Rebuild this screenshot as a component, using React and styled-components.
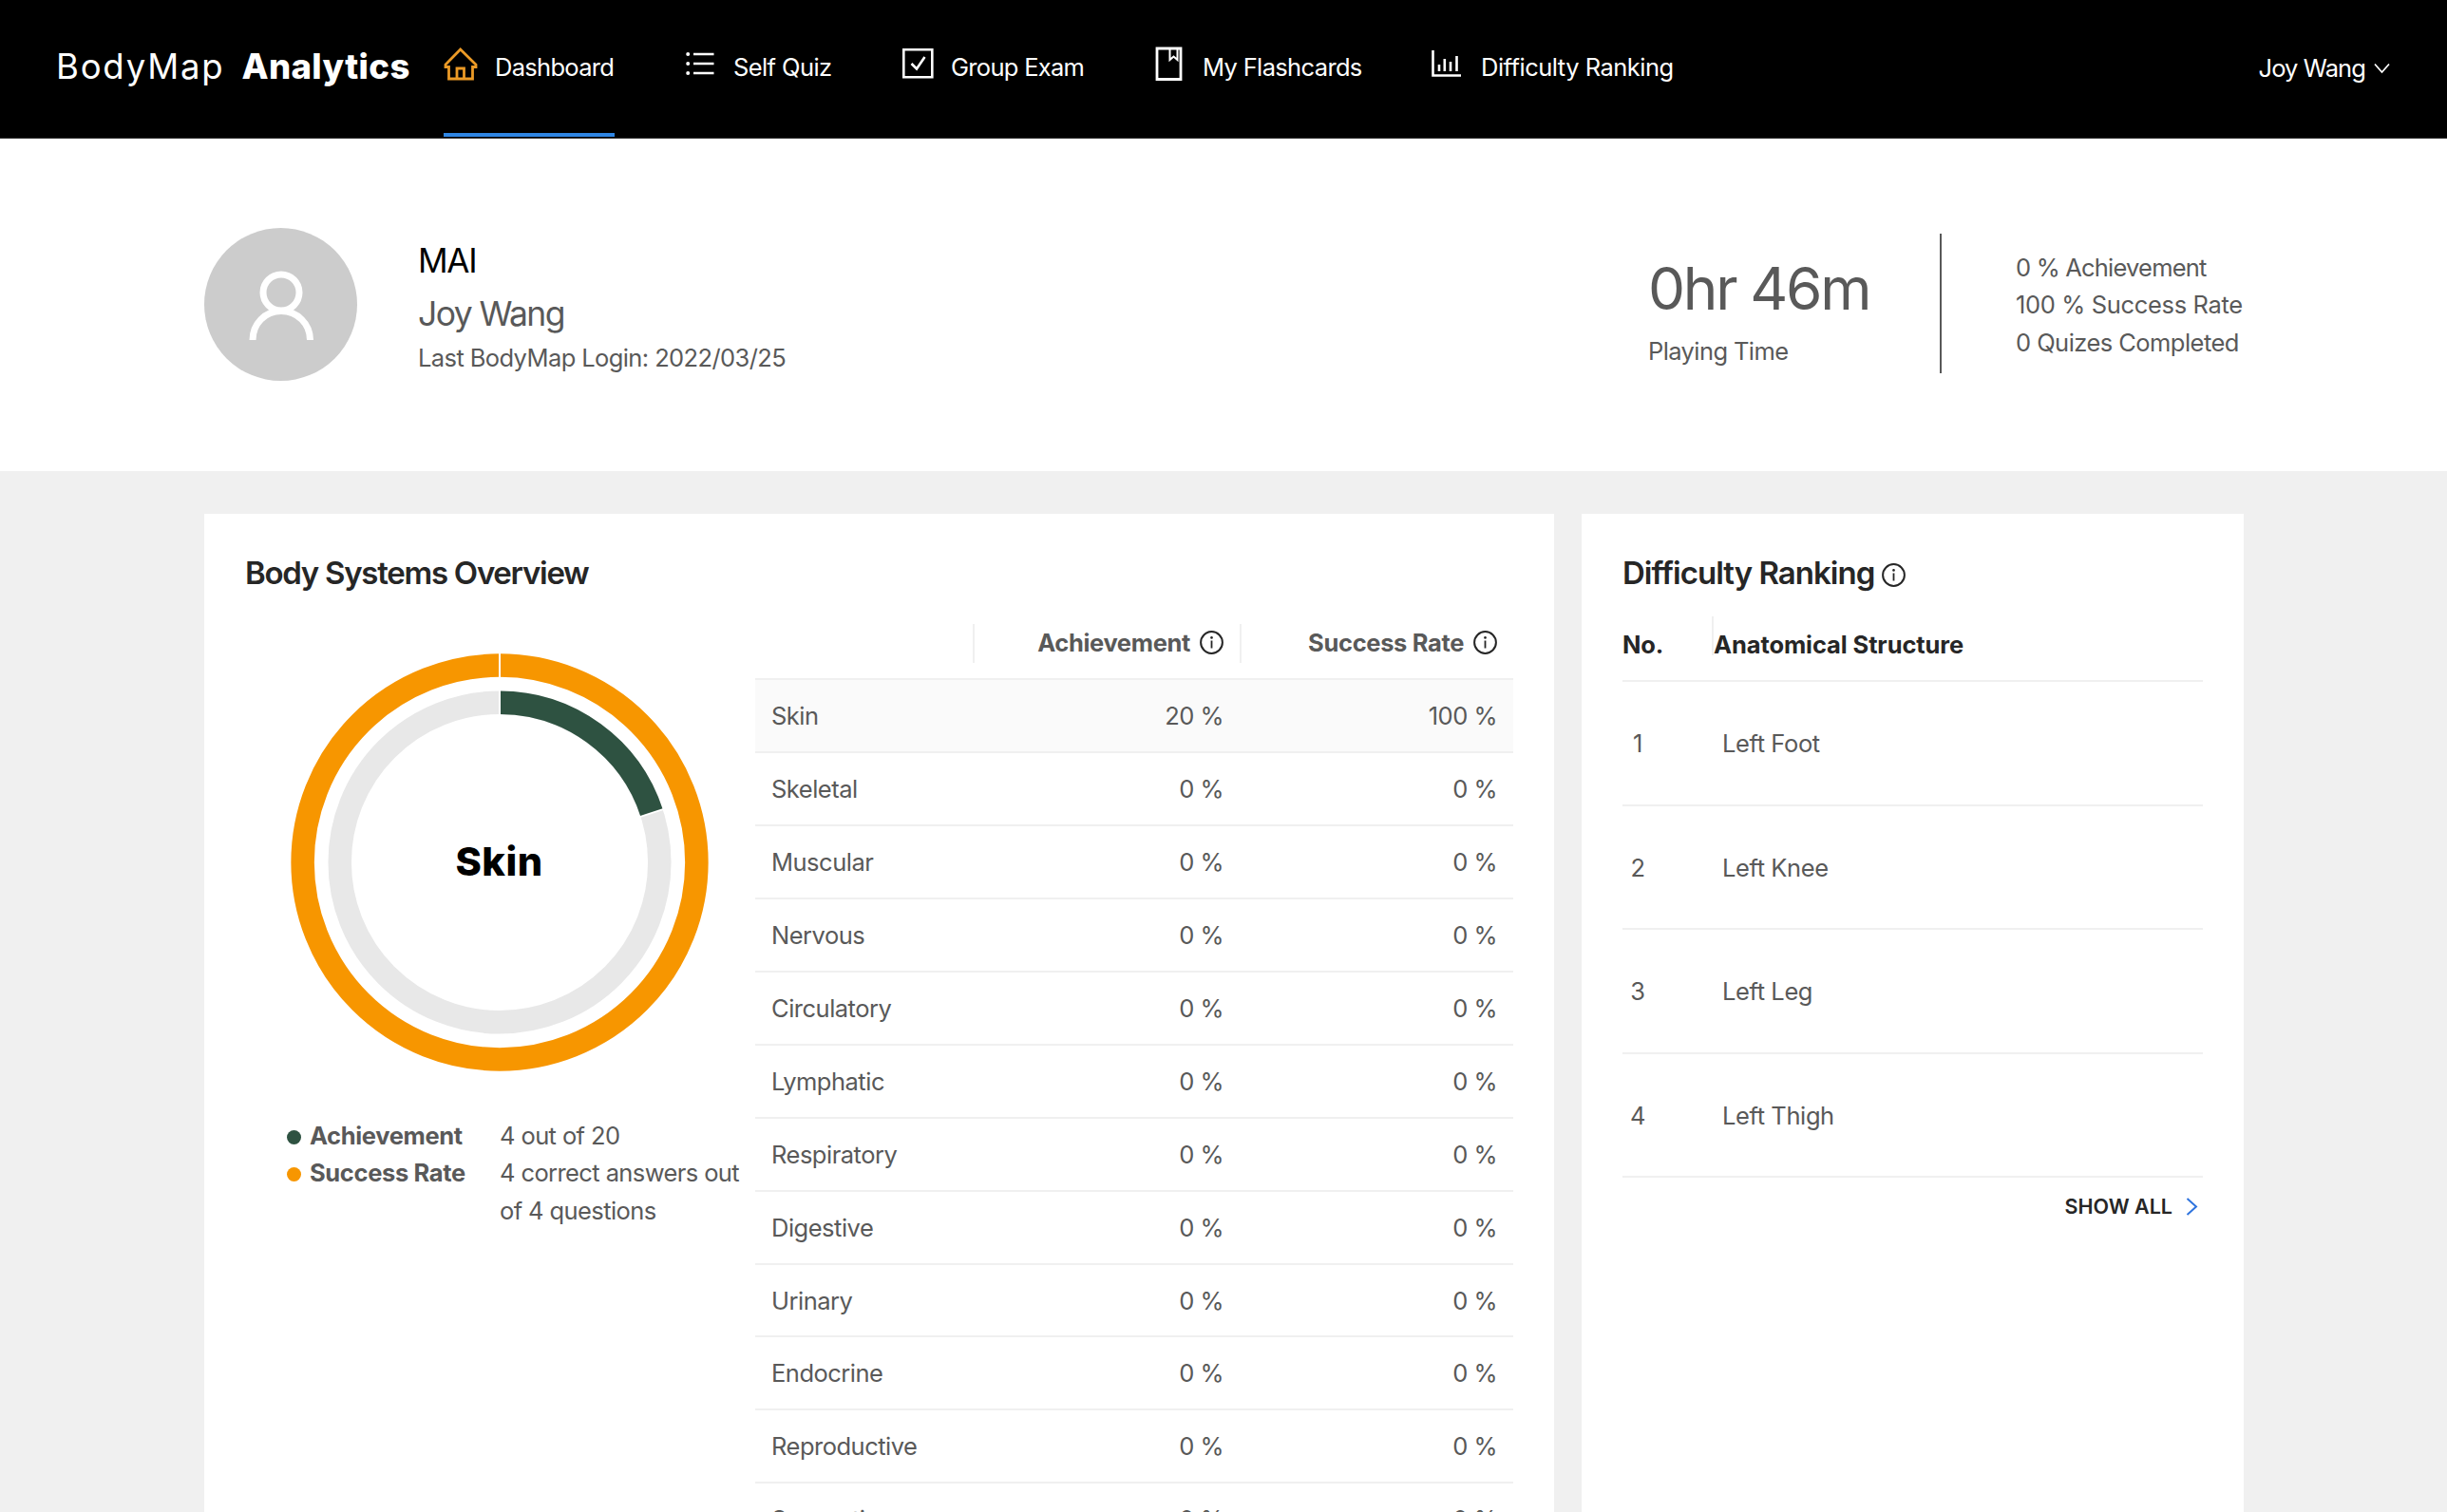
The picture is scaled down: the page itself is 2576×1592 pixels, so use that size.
import styled, { createGlobalStyle } from 'styled-components'

// Colors used across the page
const colors = {
  text: '#595959',
  title: '#262626',
  line: '#f0f0f0',
  background: '#f0f0f0',
  orange: '#f79600',
  green: '#2e5241',
  grey: '#e8e8e8',
  blue: '#2f86e4',
}

const GlobalStyle = createGlobalStyle`
  * {
    box-sizing: border-box;
  }

  html, body, #root {
    height: 100%;
  }

  #root {
    display: flex;
    flex-direction: column;
  }

  body {
    margin: 0;
    overflow: hidden;
    background-color: ${colors.background};
    color: ${colors.text};
    font-family: Inter, 'Liberation Sans', sans-serif;
    font-size: 25.5px;
  }
`

// Header
const Header = styled.header`
  display: flex;
  flex: none;
  height: 146px;
  padding: 0 60px 0 59px;
  background-color: #000000;
  border-bottom: 1px solid #333333;
  color: #ffffff;
`

const Logo = styled.div`
  display: flex;
  width: 408px;
  padding-top: 48px;
  font-size: 36.5px;
  line-height: 44px;
  font-weight: 400;
  letter-spacing: 1.8px;
  white-space: nowrap;

  strong {
    margin-left: 18px;
    font-weight: 800;
    letter-spacing: 0.4px;
  }
`

const Nav = styled.nav`
  display: flex;
  flex: 1;
  gap: 75px;
`

const NavItem = styled.a`
  display: flex;
  width: ${({ $width }) => $width}px;
  height: 144px;
  padding-top: 45px;
  border-bottom: 4px solid ${({ $active }) => ($active ? colors.blue : 'transparent')};
  line-height: 52px;
  letter-spacing: ${({ $spacing }) => $spacing || 0}px;
  white-space: nowrap;

  svg {
    flex: none;
    width: 36px;
    height: 44px;
    margin-right: ${({ $gap }) => $gap}px;
  }
`

const User = styled.div`
  display: flex;
  gap: 9px;
  padding-top: 46px;
  line-height: 52px;
  letter-spacing: -0.9px;

  svg {
    margin-top: 20px;
  }
`

// Profile banner
const Profile = styled.section`
  display: flex;
  flex: none;
  height: 350px;
  padding: 94px 214px 0 215px;
  background-color: #ffffff;
`

const Avatar = styled.div`
  width: 161px;
  height: 161px;
  border-radius: 50%;
  background-color: #cccccc;
`

const Identity = styled.div`
  flex: 1;
  padding: 10px 0 0 64px;
`

const Organisation = styled.div`
  color: #000000;
  font-size: 35px;
  line-height: 48px;
  letter-spacing: -1.3px;
`

const FullName = styled.div`
  margin-top: 8px;
  font-size: 35.5px;
  line-height: 49px;
  letter-spacing: -1.6px;
`

const LastLogin = styled.div`
  margin-top: 2px;
  line-height: 39px;
  letter-spacing: -0.6px;
`

const PlayingTime = styled.div`
  width: 308px;
  padding: 20px 0 0 1px;

  strong {
    display: block;
    font-size: 62px;
    font-weight: 400;
    line-height: 88px;
    letter-spacing: -2.3px;
  }

  span {
    display: block;
    line-height: 44px;
    letter-spacing: -0.6px;
  }
`

const Stats = styled.ul`
  width: 320px;
  height: 147px;
  margin: 6px 0 0;
  padding: 16px 0 0 78px;
  border-left: 2px solid ${colors.text};
  list-style: none;
  line-height: 39.3px;
  white-space: nowrap;
`

const Stat = styled.li`
  letter-spacing: ${({ $spacing }) => $spacing}px;
`

// Main content
const Main = styled.main`
  display: flex;
  flex: 1;
  gap: 29px;
  min-height: 0;
  padding: 45px 214px 0 215px;
`

const Card = styled.section`
  width: ${({ $width }) => $width}px;
  padding: 39px 43px 0 43px;
  background-color: #ffffff;
  overflow: hidden;
`

const CardTitle = styled.h2`
  display: flex;
  align-items: center;
  margin: 0 0 1px;
  color: ${colors.title};
  font-size: 33px;
  font-weight: 600;
  line-height: 46px;
  letter-spacing: ${({ $spacing }) => $spacing}px;

  svg {
    margin: 4px 0 0 8px;
  }
`

const Overview = styled.div`
  display: flex;
`

const ChartColumn = styled.div`
  flex: none;
  width: 537px;
  padding: 61px 0 0 43px;
`

const ChartBox = styled.div`
  display: grid;
  width: 449px;
  height: 440px;
  place-items: center;

  > * {
    grid-area: 1 / 1;
  }
`

const ChartLabel = styled.div`
  padding-bottom: 3px;
  color: #000000;
  font-size: 41.5px;
  font-weight: 800;
  letter-spacing: 0.5px;
`

const Legend = styled.dl`
  display: grid;
  grid-template-columns: 224px 1fr;
  margin: 48px 0 0 1px;
  line-height: 39.3px;
  white-space: nowrap;

  dt {
    display: flex;
    gap: 9px;
    font-weight: 700;
    letter-spacing: -0.35px;
  }

  dd {
    margin: 0;
    letter-spacing: -0.6px;
  }
`

const Dot = styled.i`
  width: 15px;
  height: 15px;
  margin-top: 14px;
  border-radius: 50%;
  background-color: ${({ $color }) => $color};
`

const SystemsTable = styled.div`
  flex: none;
  width: 798px;
  padding-top: 20px;
`

const SystemsHead = styled.div`
  display: grid;
  grid-template-columns: 229px 281px 288px;
  height: 69px;
  border-bottom: 2px solid ${colors.line};
  font-weight: 700;
  letter-spacing: -0.35px;
`

const HeadCell = styled.div`
  display: flex;
  justify-content: flex-end;
  gap: 10px;
  height: 41px;
  margin-top: 10px;
  padding-right: 17px;
  border-left: 2px solid ${colors.line};
  line-height: 39px;

  svg {
    margin-top: 7px;
  }
`

const SystemRow = styled.div`
  display: grid;
  grid-template-columns: 229px 281px 288px;
  height: 76.94px;
  border-bottom: 2px solid ${colors.line};
  background-color: ${({ $selected }) => ($selected ? '#fafafa' : '#ffffff')};
  line-height: 75px;
  letter-spacing: -0.5px;

  span {
    padding: 0 17px;
    text-align: right;
  }

  span:first-child {
    text-align: left;
  }
`

const RankingHead = styled.div`
  display: grid;
  grid-template-columns: 94px 1fr;
  width: 611px;
  height: 91px;
  padding-top: 22px;
  border-bottom: 2px solid ${colors.line};
  color: ${colors.title};
  font-weight: 700;
  letter-spacing: -0.1px;

  span {
    height: 41px;
    line-height: 60px;
  }

  span + span {
    border-left: 2px solid ${colors.line};
  }
`

const RankingRow = styled.div`
  display: grid;
  grid-template-columns: 105px 1fr;
  width: 611px;
  height: 130.6px;
  border-bottom: 2px solid ${colors.line};
  line-height: 129px;
  letter-spacing: -0.4px;
`

const RankNumber = styled.span`
  width: 32px;
  text-align: center;
`

const ShowAll = styled.a`
  display: flex;
  justify-content: flex-end;
  gap: 14px;
  width: 606px;
  padding-top: 10px;
  color: ${colors.title};
  font-size: 21.5px;
  font-weight: 600;
  line-height: 40px;

  svg {
    margin-top: 11px;
  }
`

// Icons
const HomeIcon = () => (
  <svg viewBox="0 0 36 44" fill="none" stroke="#eb9a26" strokeWidth="2.8">
    <path d="M17.7 7L2 23v2.500h3.500v12.500h25V25.500h3.500v-2.500z" />
    <path d="M14 38V27h7.500v11" />
  </svg>
)

const ListIcon = () => (
  <svg viewBox="0 0 36 44" fill="none" stroke="#ffffff" strokeWidth="2.400">
    <path d="M8 12h21.500M8 22h21.500M8 32h21.500" />
    <g fill="#ffffff" stroke="none">
      <circle cx="2.200" cy="12" r="2" />
      <circle cx="2.200" cy="22" r="2" />
      <circle cx="2.200" cy="32" r="2" />
    </g>
  </svg>
)

const CheckIcon = () => (
  <svg viewBox="0 0 36 44" fill="none" stroke="#ffffff" strokeWidth="2.600">
    <path d="M1.300 7.300h30v29h-30z" />
    <path d="M9.500 22l5.500 5.500L23.500 15" />
  </svg>
)

const BookIcon = () => (
  <svg viewBox="0 0 36 44" fill="none" stroke="#ffffff" strokeWidth="2.800">
    <path d="M2 6h25v32.500H2z" />
    <path d="M15.500 6v12l4-3.500 4 3.500V6" strokeWidth="2" />
  </svg>
)

const ChartIcon = () => (
  <svg viewBox="0 0 36 44" fill="none" stroke="#ffffff" strokeWidth="2.600">
    <path d="M1.500 8v26.500H31" />
    <path d="M8 23v7M13.800 17v13M20 20v10M26.500 14v16" />
  </svg>
)

const InfoIcon = () => (
  <svg width="25" height="25" viewBox="0 0 25 25" fill="none" stroke={colors.title}>
    <circle cx="12.500" cy="12.500" r="11.400" strokeWidth="2" />
    <path d="M12.500 10.500V18.500" strokeWidth="1.800" />
    <circle cx="12.500" cy="7.400" r="1.300" fill={colors.title} stroke="none" />
  </svg>
)

const DownIcon = () => (
  <svg width="17" height="12" viewBox="0 0 17 12" fill="none" stroke="#ffffff" strokeWidth="1.700">
    <path d="M1 1.500l7.500 8.500L16 1.500" />
  </svg>
)

const RightIcon = () => (
  <svg width="13" height="19" viewBox="0 0 13 19" fill="none" stroke="#2f74de" strokeWidth="2">
    <path d="M1.500 1l9.500 8.500L1.500 18" />
  </svg>
)

const UserIcon = () => (
  <svg width="161" height="161" viewBox="0 0 161 161" fill="none" stroke="#ffffff" strokeWidth="7">
    <circle cx="81" cy="68" r="19" />
    <path d="M51 118c0-17 13-30.500 30-30.500s30.500 13.500 30.500 30.500" />
  </svg>
)

// Two rings: the outer one is the success rate, the inner one the achievement
const RING = 24.5

const Ring = ({ radius, value, color }) => {
  const length = 2 * Math.PI * radius
  const angle = value * 2 * Math.PI
  const inner = radius - RING / 2 - 1
  const outer = radius + RING / 2 + 1
  return (
    <g fill="none" strokeWidth={RING}>
      {value < 1 && <circle r={radius} stroke={colors.grey} />}
      <circle
        r={radius}
        stroke={color}
        strokeDasharray={value < 1 ? `${length * value} ${length}` : undefined}
        transform="rotate(-90)"
      />
      <path d={`M0 ${-inner}V${-outer}`} stroke="#ffffff" strokeWidth="2" />
      <path
        d={`M${inner * Math.sin(angle)} ${-inner * Math.cos(angle)}L${outer * Math.sin(angle)} ${-outer * Math.cos(angle)}`}
        stroke="#ffffff"
        strokeWidth="2"
      />
    </g>
  )
}

const navItems = [
  { label: 'Dashboard', Icon: HomeIcon, width: 180, gap: 18, active: true, spacing: -0.7 },
  { label: 'Self Quiz', Icon: ListIcon, width: 153, gap: 14, spacing: -0.6 },
  { label: 'Group Exam', Icon: CheckIcon, width: 191, gap: 15, spacing: -0.7 },
  { label: 'My Flashcards', Icon: BookIcon, width: 216, gap: 14, spacing: -0.65 },
  { label: 'Difficulty Ranking', Icon: ChartIcon, width: 254, gap: 16, spacing: -0.5 },
]

const stats = [
  { label: '0 % Achievement', spacing: -0.8 },
  { label: '100 % Success Rate', spacing: -0.35 },
  { label: '0 Quizes Completed', spacing: -0.55 },
]

const systems = [
  { name: 'Skin', achievement: 20, success: 100 },
  { name: 'Skeletal', achievement: 0, success: 0 },
  { name: 'Muscular', achievement: 0, success: 0 },
  { name: 'Nervous', achievement: 0, success: 0 },
  { name: 'Circulatory', achievement: 0, success: 0 },
  { name: 'Lymphatic', achievement: 0, success: 0 },
  { name: 'Respiratory', achievement: 0, success: 0 },
  { name: 'Digestive', achievement: 0, success: 0 },
  { name: 'Urinary', achievement: 0, success: 0 },
  { name: 'Endocrine', achievement: 0, success: 0 },
  { name: 'Reproductive', achievement: 0, success: 0 },
  { name: 'Supporting', achievement: 0, success: 0 },
]

const ranking = ['Left Foot', 'Left Knee', 'Left Leg', 'Left Thigh']

function App() {
  const selected = systems[0]

  return (
    <>
      <GlobalStyle />
      <Header>
        <Logo>
          BodyMap <strong>Analytics</strong>
        </Logo>
        <Nav>
          {navItems.map(({ label, Icon, width, gap, active, spacing }) => (
            <NavItem key={label} $width={width} $gap={gap} $active={active} $spacing={spacing}>
              <Icon />
              {label}
            </NavItem>
          ))}
        </Nav>
        <User>
          Joy Wang
          <DownIcon />
        </User>
      </Header>

      <Profile>
        <Avatar>
          <UserIcon />
        </Avatar>
        <Identity>
          <Organisation>MAI</Organisation>
          <FullName>Joy Wang</FullName>
          <LastLogin>Last BodyMap Login: 2022/03/25</LastLogin>
        </Identity>
        <PlayingTime>
          <strong>0hr 46m</strong>
          <span>Playing Time</span>
        </PlayingTime>
        <Stats>
          {stats.map(({ label, spacing }) => (
            <Stat key={label} $spacing={spacing}>
              {label}
            </Stat>
          ))}
        </Stats>
      </Profile>

      <Main>
        <Card $width={1421}>
          <CardTitle $spacing={-1.28}>Body Systems Overview</CardTitle>
          <Overview>
            <ChartColumn>
              <ChartBox>
                <svg width="440" height="440" viewBox="-220 -220 440 440">
                  <Ring radius={207.4} value={selected.success / 100} color={colors.orange} />
                  <Ring radius={168.3} value={selected.achievement / 100} color={colors.green} />
                </svg>
                <ChartLabel>{selected.name}</ChartLabel>
              </ChartBox>
              <Legend>
                <dt>
                  <Dot $color={colors.green} />
                  Achievement
                </dt>
                <dd>4 out of 20</dd>
                <dt>
                  <Dot $color={colors.orange} />
                  Success Rate
                </dt>
                <dd>
                  4 correct answers out
                  <br />
                  of 4 questions
                </dd>
              </Legend>
            </ChartColumn>
            <SystemsTable>
              <SystemsHead>
                <span />
                <HeadCell>
                  Achievement
                  <InfoIcon />
                </HeadCell>
                <HeadCell>
                  Success Rate
                  <InfoIcon />
                </HeadCell>
              </SystemsHead>
              {systems.map((system) => (
                <SystemRow key={system.name} $selected={system === selected}>
                  <span>{system.name}</span>
                  <span>{system.achievement} %</span>
                  <span>{system.success} %</span>
                </SystemRow>
              ))}
            </SystemsTable>
          </Overview>
        </Card>

        <Card $width={697}>
          <CardTitle $spacing={-0.98}>
            Difficulty Ranking
            <InfoIcon />
          </CardTitle>
          <RankingHead>
            <span>No.</span>
            <span>Anatomical Structure</span>
          </RankingHead>
          {ranking.map((structure, index) => (
            <RankingRow key={structure}>
              <RankNumber>{index + 1}</RankNumber>
              <span>{structure}</span>
            </RankingRow>
          ))}
          <ShowAll>
            SHOW ALL
            <RightIcon />
          </ShowAll>
        </Card>
      </Main>
    </>
  )
}

export default App
